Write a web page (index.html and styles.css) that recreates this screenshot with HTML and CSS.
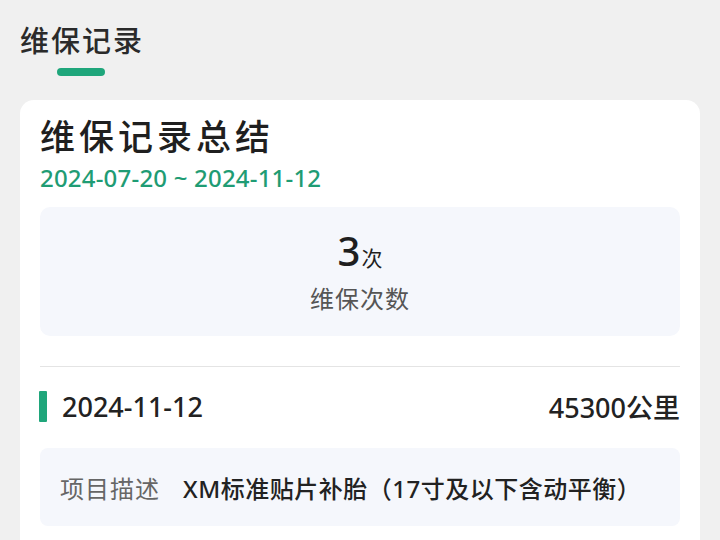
FILE: index.html
```html
<!DOCTYPE html>
<html lang="zh-CN">
<head>
<meta charset="utf-8">
<link rel="stylesheet" href="styles.css">
</head>
<body>
<div class="page">
  <div class="tabbar">
    <div class="tab">
      <span class="tab-label">维保记录</span>
      <span class="tab-line"></span>
    </div>
  </div>
  <div class="card">
    <h1 class="card-title">维保记录总结</h1>
    <div class="range">2024-07-20 ~ 2024-11-12</div>
    <div class="stats">
      <div class="stat-value"><span class="num">3</span><span class="unit">次</span></div>
      <div class="stat-label">维保次数</div>
    </div>
    <div class="divider"></div>
    <div class="record-head">
      <div class="record-date"><span class="mark"></span>2024-11-12</div>
      <div class="record-km">45300公里</div>
    </div>
    <div class="desc">
      <span class="desc-key">项目描述</span>
      <span class="desc-val">XM标准贴片补胎（17寸及以下含动平衡）</span>
    </div>
  </div>
</div>
</body>
</html>
```
FILE: styles.css
```css
* { box-sizing: border-box; }
html, body { margin: 0; padding: 0; }
body {
  background: #f0f0f0;
  font-family: "Noto Sans", "Noto Sans CJK SC", sans-serif;
  color: #222;
  width: 720px;
  height: 540px;
  overflow: hidden;
}
.page { padding: 0 20px; }
.tabbar { display: flex; padding-top: 20px; }
.tab { display: flex; flex-direction: column; align-items: center; }
.tab-label {
  font-size: 29px;
  font-weight: 500;
  letter-spacing: 2px;
  line-height: 42px;
  color: #2a2a2a;
  margin-right: -2px;
}
.tab-line {
  margin-top: 6px;
  width: 48px;
  height: 8px;
  border-radius: 4px;
  background: #1fa67b;
}
.card {
  margin-top: 24px;
  background: #fff;
  border-radius: 14px;
  padding: 12px 20px 20px;
  height: 480px;
}
.card-title {
  margin: 0;
  font-weight: 500;
  font-size: 35px;
  letter-spacing: 4px;
  line-height: 50px;
  color: #1f1f1f;
}
.range {
  font-size: 24px;
  font-weight: 500;
  letter-spacing: 0.2px;
  line-height: 32px;
  color: #1f9c74;
}
.stats {
  margin-top: 13px;
  height: 129px;
  background: #f5f7fc;
  border-radius: 10px;
  display: flex;
  flex-direction: column;
  align-items: center;
  justify-content: center;
  padding-top: 2px;
}
.stat-value { line-height: 44px; color: #1f1f1f; }
.num { font-size: 40px; font-weight: 500; }
.unit { font-size: 21px; margin-left: 1px; }
.stat-label { font-size: 24px; letter-spacing: 1px; line-height: 34px; color: #555; }
.divider { margin-top: 30px; height: 1px; background: #e4e4e4; }
.record-head {
  display: flex;
  justify-content: space-between;
  align-items: center;
  margin-top: 23px;
  height: 32px;
}
.record-date {
  display: flex;
  align-items: center;
  font-size: 27px;
  font-weight: 500;
  color: #222;
}
.mark {
  width: 8px;
  height: 31px;
  background: #1fa67b;
  border-radius: 1px;
  margin-left: -1px;
  margin-right: 15px;
}
.record-km { font-size: 27px; font-weight: 500; color: #222; }
.desc {
  margin-top: 26px;
  height: 78px;
  background: #f5f7fc;
  border-radius: 8px;
  display: flex;
  align-items: center;
  padding-left: 20px;
  font-size: 24px;
}
.desc-key { color: #666; letter-spacing: 1px; width: 123px; }
.desc-val { color: #222; font-weight: 500; letter-spacing: 0.5px; }
```
